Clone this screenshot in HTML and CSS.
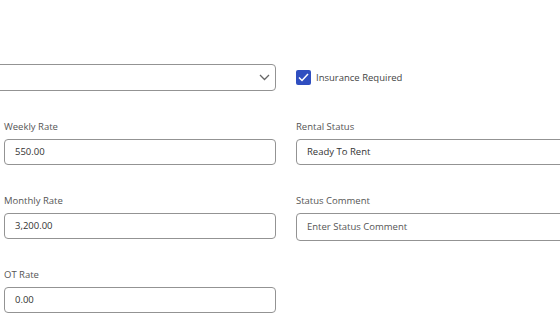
FILE: index.html
```html
<!DOCTYPE html>
<html lang="en">
<head>
    <meta charset="UTF-8">
    <meta name="viewport" content="width=device-width, initial-scale=1.0">
    <title>Rental Details</title>
    <link rel="stylesheet" href="styles.css">
</head>
<body>

    <div class="form-grid">
        <!-- Top row: select + checkbox -->
        <div class="field">
            <div class="select-box">
                <span class="select-value"></span>
                <svg class="chevron" width="11" height="7" viewBox="0 0 11 7">
                    <path d="M1 1 L5.5 5.5 L10 1" fill="none" stroke="#666" stroke-width="1.3"/>
                </svg>
            </div>
        </div>
        <div class="field check-field">
            <span class="checkbox">
                <svg width="11" height="9" viewBox="0 0 11 9">
                    <path d="M1 4.5 L4 7.5 L10 1" fill="none" stroke="#fff" stroke-width="1.5"/>
                </svg>
            </span>
            <span class="check-label">Insurance Required</span>
        </div>

        <!-- Weekly Rate / Rental Status -->
        <div class="field">
            <label class="field-label">Weekly Rate</label>
            <div class="input-box">550.00</div>
        </div>
        <div class="field">
            <label class="field-label">Rental Status</label>
            <div class="input-box">Ready To Rent</div>
        </div>

        <!-- Monthly Rate / Status Comment -->
        <div class="field">
            <label class="field-label">Monthly Rate</label>
            <div class="input-box">3,200.00</div>
        </div>
        <div class="field">
            <label class="field-label">Status Comment</label>
            <div class="input-box placeholder tall">Enter Status Comment</div>
        </div>

        <!-- OT Rate -->
        <div class="field">
            <label class="field-label">OT Rate</label>
            <div class="input-box">0.00</div>
        </div>
    </div>

</body>
</html>
```

FILE: styles.css
```css
/* Basic Styling */
body {
    margin: 0;
    font-family: "Open Sans", "Noto Sans", sans-serif;
    font-size: 9.5px;
    color: #333;
    background: #fff;
    overflow: hidden;
}
.form-grid {
    display: grid;
    grid-template-columns: 272px 272px;
    align-items: start;
    column-gap: 20px;
    row-gap: 31px;
    padding: 64px 0 0 4px;
    width: 600px;
}
.field {
    display: flex;
    flex-direction: column;
}
.field-label {
    color: #555;
    height: 17px;
    line-height: 9px;
}
.select-box {
    display: flex;
    align-items: center;
    justify-content: flex-end;
    height: 25px;
    margin-left: -24px;
    border: 1px solid #939393;
    border-radius: 4px;
    padding-right: 5px;
}
.check-field {
    flex-direction: row;
    align-items: center;
    height: 27px;
}
.checkbox {
    display: flex;
    align-items: center;
    justify-content: center;
    width: 15px;
    height: 15px;
    background: #2f4ec0;
    border-radius: 2px;
    margin-right: 5px;
}
.check-label {
    color: #444;
}
.input-box {
    height: 24px;
    line-height: 24px;
    border: 1px solid #939393;
    border-radius: 4px;
    padding-left: 10px;
}
.input-box.tall {
    height: 26px;
    line-height: 26px;
    margin-bottom: -2px;
}
.placeholder {
    color: #555;
}
```
